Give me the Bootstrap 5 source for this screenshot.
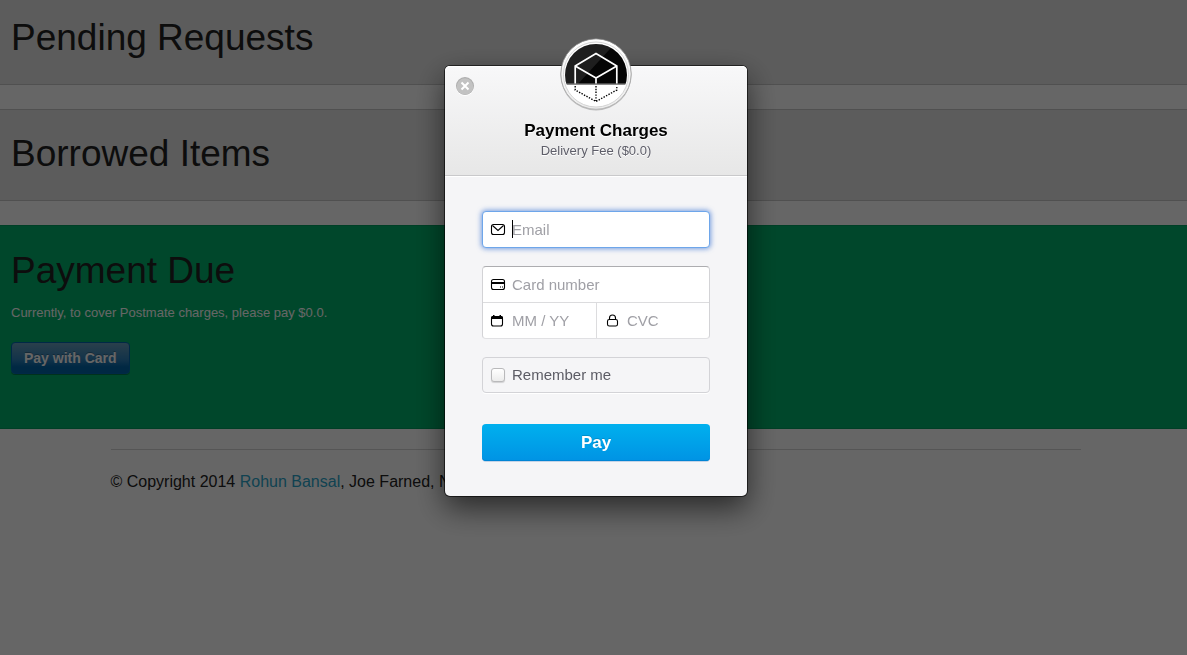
<!DOCTYPE html>
<html lang="en">
<head>
<meta charset="utf-8">
<meta name="viewport" content="width=device-width, initial-scale=1">
<title>Payment Charges</title>
<link href="https://cdn.jsdelivr.net/npm/bootstrap@5.3.0/dist/css/bootstrap.min.css" rel="stylesheet">
<style>
  body { font-family: "Liberation Sans", Arial, sans-serif; color: #222; background: #fff; }

  /* page sections */
  .strip { background: #e5e5e5; border: solid #c8c8c8; border-width: 1px 0; padding: 18px 11px 20px; }
  .strip-first { border-top: 0; padding-top: 12px; }
  .strip-due { background: #00b26b; border-color: #009e5f; padding-top: 19px; padding-bottom: 54px; }
  .strip h2 { font-size: 37px; line-height: 52px; font-weight: 400; margin: 0; }
  .strip p { font-size: 13px; line-height: 20px; color: #fff; margin: 6px 0 19px; }
  .card-btn { font-size: 14px; line-height: 20px; font-weight: 700; color: #fff; padding: 5px 12px; border: 1px solid #0068b0; border-radius: 4px;
    background: linear-gradient(#6a9fbc, #2f80b8 55%, #0064a8 80%); box-shadow: 0 1px 0 rgba(0,0,0,.3); text-shadow: 0 -1px 0 rgba(0,0,0,.25); }
  .foot-wrap { padding-left: 4px; }
  .foot { max-width: 970px; }
  .foot hr { border-color: #d4d4d4; opacity: 1; margin: 20px 0; }
  .foot a { color: #2ba6cb; text-decoration: none; }

  /* checkout dialog */
  .checkout { background: rgba(0,0,0,.6); padding-left: 5px; }
  .checkout .modal-dialog { max-width: 302px; margin: 66px auto; }
  .checkout .modal-content { background: #f5f5f7; border: 0; border-radius: 5px;
    box-shadow: 0 0 0 1px rgba(0,0,0,.6), 0 12px 30px rgba(0,0,0,.6); }
  .pay-head { background: linear-gradient(#f8f8f9, #e7e7e7); border-bottom: 1px solid #c9c9cb; border-radius: 5px 5px 0 0;
    box-shadow: inset 0 1px 0 #fff, 0 1px 0 #fff; padding: 55px 10px 14px; text-shadow: 0 1px 0 #fff; }
  .pay-head h1 { font-size: 17px; line-height: 20px; font-weight: 700; color: #000; margin: 0; }
  .pay-head h2 { font-size: 13px; line-height: 20px; font-weight: 400; color: #5e5e69; margin: 0; }
  .logo { top: -28px; left: 50%; transform: translateX(-50%); }
  .x-btn { top: 10px; left: 10px; padding: 0; border: 0; background: none; line-height: 0; }
  .pay-body { padding: 35px 37px; font-size: 15px; }
  .pay-body input[type=text], .pay-body input[type=email] { font-size: 15px; line-height: 20px; border: 0; border-radius: 0; background: none; box-shadow: none; padding: 8px 0; min-width: 0; }
  .pay-body input::placeholder { color: #a0a0a6; opacity: 1; }
  .field { padding-left: 7px; gap: 6px; height: 36px; }
  .field svg { flex: none; }
  .field-email { height: 37px; background: #fff; border: 1px solid #6ea6ea; border-radius: 4px; box-shadow: 0 0 5px 1px rgba(80,130,215,.75); }
  .caret { left: 29px; top: 8px; width: 1px; height: 18px; background: #000; }
  .card-group-box { margin: 18px 0; background: #fff; border: 1px solid #d3d3d6; border-top-color: #adadb0; border-bottom-color: #e0e0e3; border-radius: 4px; }
  .card-group-box .field { height: 35px; }
  .rule-top { border-top: 1px solid #dcdcde; }
  .rule-left { border-left: 1px solid #dcdcde; padding-left: 8px; }
  .remember { height: 36px; padding-left: 8px; border: 1px solid #d3d3d7; border-radius: 4px; color: #5c5c65; box-shadow: 0 1px 0 #fff; }
  .remember .form-check-input { width: 14px; height: 14px; margin: 0; border: 1px solid #b9b9bb; border-radius: 3px; background-color: #fff;
    background-image: linear-gradient(#fff, #ececec); box-shadow: 0 1px 1px rgba(0,0,0,.15); }
  .remember label { padding-left: 7px; line-height: 20px; }
  .pay-btn { margin-top: 31px; height: 37px; padding: 0; border: 0; border-radius: 4px; color: #fff; font-size: 17px; line-height: 20px; font-weight: 700;
    background: linear-gradient(#00b0ee, #0093e4); box-shadow: inset 0 -1px 0 #0084d4, 0 1px 0 #c5d3e6; text-shadow: 0 -1px 0 rgba(0,0,0,.15); }
</style>
</head>
<body>
<main>
  <section class="strip strip-first mb-4"><h2>Pending Requests</h2></section>
  <section class="strip mb-4"><h2>Borrowed Items</h2></section>
  <section class="strip strip-due">
    <h2>Payment Due</h2>
    <p>Currently, to cover Postmate charges, please pay $0.0.</p>
    <button type="button" class="btn card-btn">Pay with Card</button>
  </section>
</main>
<div class="foot-wrap">
  <footer class="foot mx-auto">
    <hr>
    <div>© Copyright 2014 <a href="#">Rohun Bansal</a>, Joe Farned, N</div>
  </footer>
</div>

<div class="modal show d-block checkout" tabindex="-1" role="dialog" aria-labelledby="pay-title">
  <div class="modal-dialog">
    <div class="modal-content">
      <svg class="logo position-absolute" width="72" height="73" viewBox="0 0 72 73" aria-hidden="true">
        <defs>
          <linearGradient id="ring" x1="0" y1="0" x2="0" y2="1"><stop offset="0" stop-color="#fff"/><stop offset="1" stop-color="#ececec"/></linearGradient>
          <linearGradient id="rim" x1="0" y1="0" x2="0" y2="1"><stop offset="0" stop-color="#777"/><stop offset="1" stop-color="#b0b0b0"/></linearGradient>
          <clipPath id="disc"><circle cx="36" cy="37" r="31"/></clipPath>
        </defs>
        <circle cx="36" cy="37" r="35.5" fill="#000" opacity=".22"/>
        <circle cx="36" cy="36" r="35.2" fill="url(#ring)" stroke="url(#rim)" stroke-width=".8"/>
        <circle cx="36" cy="36.5" r="32.500" fill="#fff" stroke="#d0d0d0" stroke-width=".9"/>
        <g clip-path="url(#disc)">
          <path d="M0 0h72v46H0z" fill="#050505"/>
          <path d="M0 0h60L18 46H0z" fill="#fff" opacity=".1"/>
          <path d="M0 45.500h72v1.500H0z" fill="#8a8a8a"/>
        </g>
        <path d="M15.200 45.500V28L36 15.500 56.800 28v17.500M15.200 28 36 40 56.800 28M36 40v5.500" fill="none" stroke="#fff" stroke-width="1.700"/>
        <path d="M15.200 48v4L36 63.500 56.800 52v-4M36 48v15" fill="none" stroke="#000" stroke-width="1.400" stroke-dasharray="1.400 1.400"/>
      </svg>
      <button type="button" class="x-btn position-absolute" aria-label="Close">
        <svg width="20" height="20" viewBox="0 0 20 20"><circle cx="10" cy="11" r="9" fill="#fff"/><circle cx="10" cy="10" r="9" fill="#adadad"/><circle cx="10" cy="10.500" r="8.300" fill="#c2c2c2"/><path d="m6.500 6.500 7 7M13.500 6.500l-7 7" stroke="#fff" stroke-width="2"/></svg>
      </button>
      <header class="pay-head text-center">
        <h1 id="pay-title">Payment Charges</h1>
        <h2>Delivery Fee ($0.0)</h2>
      </header>
      <form class="pay-body">
        <div class="field field-email d-flex align-items-center position-relative">
          <svg width="16" height="14" viewBox="0 0 16 14"><rect x="1.500" y="1.500" width="13" height="10" rx="2" fill="none" stroke="#000" stroke-width="1.100"/><path d="m2.500 2.500 5.500 5 5.500-5" fill="none" stroke="#000" stroke-width="1.100"/></svg>
          <input type="email" class="form-control" placeholder="Email" aria-label="Email">
          <span class="caret position-absolute"></span>
        </div>
        <div class="card-group-box">
          <div class="field d-flex align-items-center">
            <svg width="16" height="14" viewBox="0 0 16 14"><rect x="1.500" y="1.500" width="13" height="10" rx="2" fill="none" stroke="#000" stroke-width="1.100"/><path d="M1 4h14v2H1zM10 8.500h1v1h-1zM12 8.500h1v1h-1z"/></svg>
            <input type="text" class="form-control" placeholder="Card number" aria-label="Card number">
          </div>
          <div class="row g-0 rule-top">
            <div class="col-6 field d-flex align-items-center">
              <svg width="16" height="14" viewBox="0 0 16 14"><rect x="1.500" y="2.500" width="11" height="9.500" rx="2" fill="none" stroke="#000" stroke-width="1.100"/><path d="M1 5V3.500Q1 2 2.500 2H3V1h1.500v1h5V1H11v1h.5Q13 2 13 3.500V5z"/></svg>
              <input type="text" class="form-control" placeholder="MM / YY" aria-label="Expiry date">
            </div>
            <div class="col-6 field rule-left d-flex align-items-center">
              <svg width="16" height="14" viewBox="0 0 16 14"><rect x="2.500" y="5.500" width="10" height="6.500" rx="1.800" fill="none" stroke="#000" stroke-width="1.100"/><path d="M4.500 5.500V4a3 3 0 0 1 6 0v1.500" fill="none" stroke="#000" stroke-width="1.100"/></svg>
              <input type="text" class="form-control" placeholder="CVC" aria-label="CVC">
            </div>
          </div>
        </div>
        <div class="remember d-flex align-items-center">
          <input class="form-check-input" type="checkbox" id="remember">
          <label for="remember">Remember me</label>
        </div>
        <button type="button" class="btn pay-btn w-100 d-block">Pay</button>
      </form>
    </div>
  </div>
</div>
<script src="https://cdn.jsdelivr.net/npm/bootstrap@5.3.0/dist/js/bootstrap.bundle.min.js"></script>
</body>
</html>
